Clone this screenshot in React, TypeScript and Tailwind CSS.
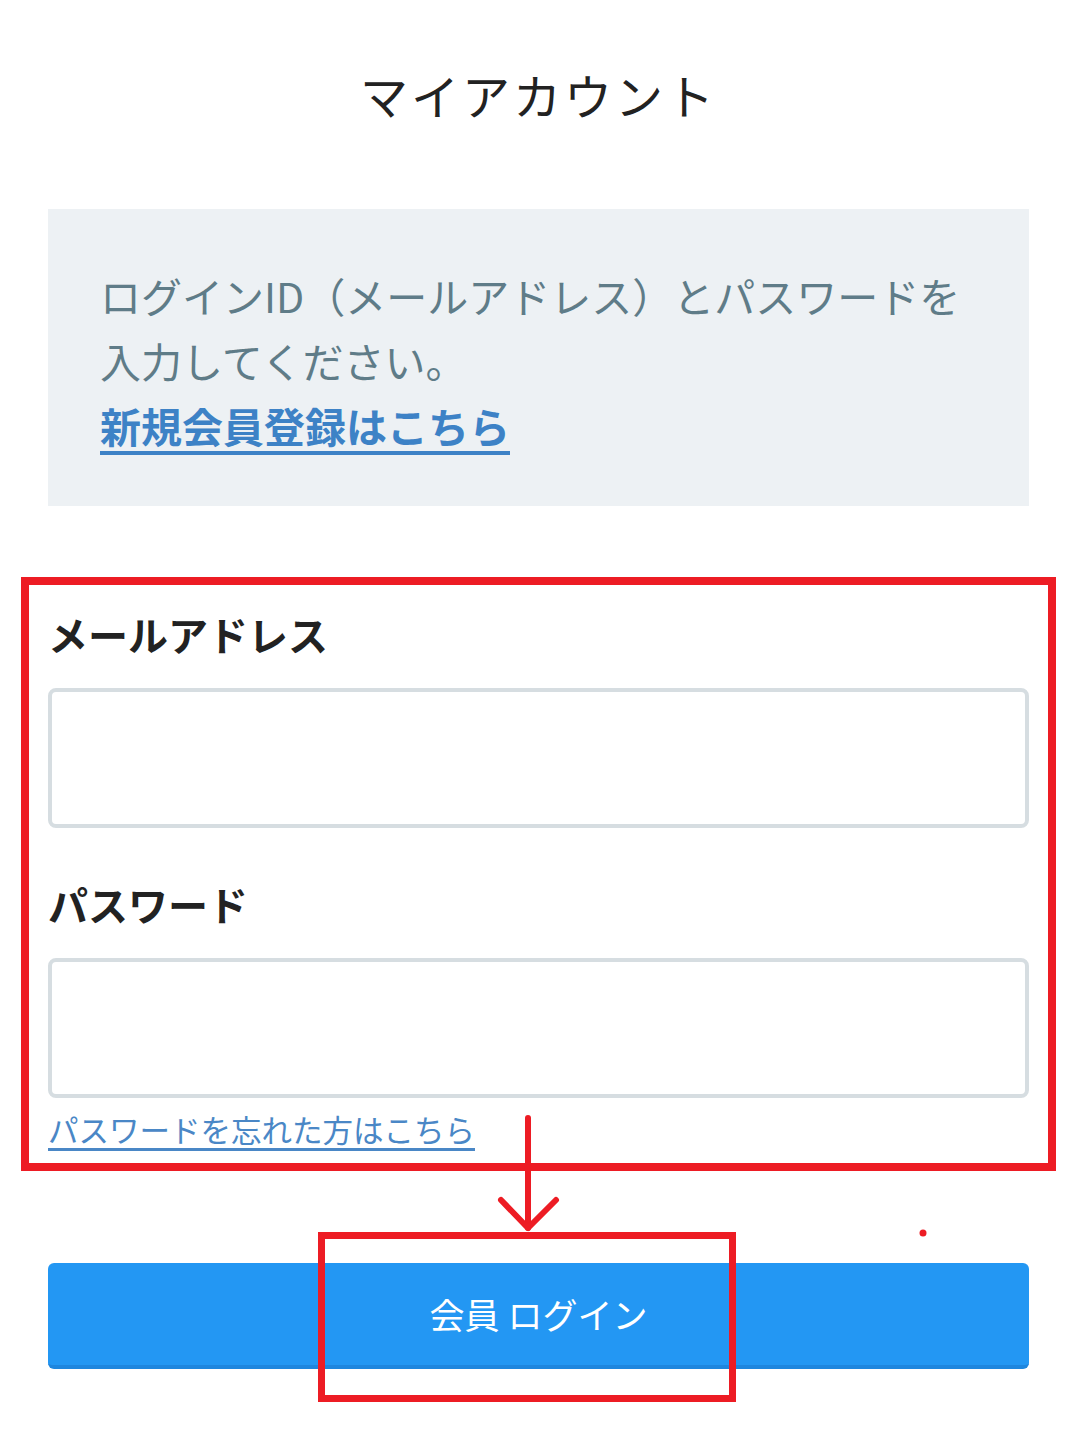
import React from "react";

const jp = { fontFamily: '"Noto Sans CJK JP", "Noto Sans", sans-serif' };

export default function App() {
  return (
    <div className="relative w-[1077px] min-h-[1435px] bg-white" style={jp}>
      <div className="px-12">
        {/* Title */}
        <h1 className="pt-[58px] pb-[3px] text-center text-[48px] leading-[72px] tracking-[3px] text-[#222]">
          マイアカウント
        </h1>

        {/* Notice box */}
        <div className="mt-[76px] bg-[#edf1f4] pt-[54px] pb-[48px] pl-[52px] pr-[60px] text-[41px] leading-[65px]">
          <p className="text-[#5f7c88]">
            ログインID（メールアドレス）とパスワードを入力してください。
          </p>
          <a href="#" className="font-bold text-[#3d82c6] underline decoration-[4px] underline-offset-[8px]">
            新規会員登録はこちら
          </a>
        </div>

        {/* Form */}
        <form className="mt-[98px]">
          <label className="block text-[40px] font-bold leading-[60px] text-[#222]">
            メールアドレス
          </label>
          <input
            type="email"
            className="mt-[24px] block h-[140px] w-full rounded-lg border-4 border-[#d6dde1] bg-white px-4 text-[36px]"
          />
          <label className="mt-[46px] block text-[40px] font-bold leading-[60px] text-[#222]">
            パスワード
          </label>
          <input
            type="password"
            className="mt-[24px] block h-[140px] w-full rounded-lg border-4 border-[#d6dde1] bg-white px-4 text-[36px]"
          />
          <a
            href="#"
            className="mt-[9px] inline-block text-[30.5px] leading-[45px] text-[#4a87c6] underline decoration-[3px] underline-offset-[6px]"
          >
            パスワードを忘れた方はこちら
          </a>
          <button
            type="button"
            className="mt-[111px] block h-[106px] w-full rounded-md border-b-4 border-[#1e86de] bg-[#2397f3] text-[35px] text-white"
          >
            会員 ログイン
          </button>
        </form>
      </div>

      {/* Red annotations */}
      <div className="pointer-events-none absolute left-[21px] top-[577px] h-[594px] w-[1035px] border-8 border-[#ed1c24]" />
      <div className="pointer-events-none absolute left-[318px] top-[1232px] h-[170px] w-[418px] border-[7px] border-[#ed1c24]" />
      <svg className="pointer-events-none absolute left-0 top-0" width="1077" height="1435">
        <path d="M528 1118 L528 1228" stroke="#ed1c24" strokeWidth="6" fill="none" strokeLinecap="round" />
        <path d="M501 1200 L528 1228 L556 1200" stroke="#ed1c24" strokeWidth="6" fill="none" strokeLinecap="round" strokeLinejoin="round" />
        <circle cx="923" cy="1233" r="3.5" fill="#ed1c24" />
      </svg>
    </div>
  );
}
